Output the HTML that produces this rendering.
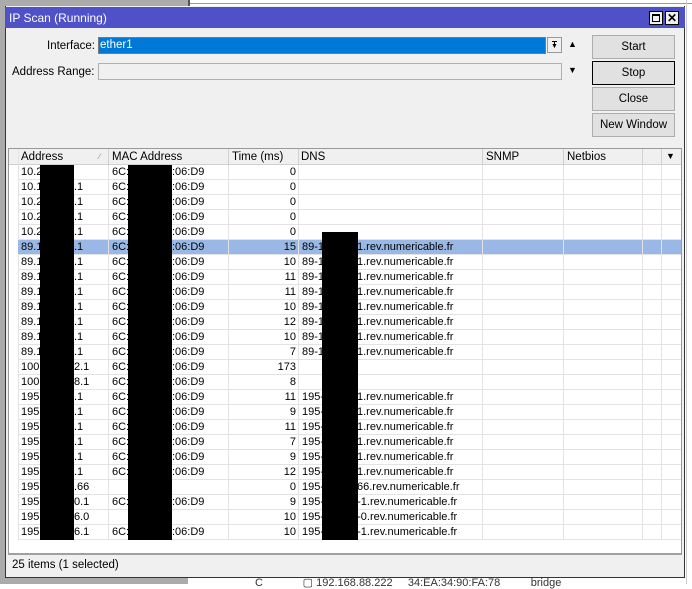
<!DOCTYPE html>
<html><head><meta charset="utf-8"><style>
*{margin:0;padding:0;box-sizing:border-box}
body{width:692px;height:584px;overflow:hidden;background:#fff;font-family:"Liberation Sans",Arial,sans-serif;font-size:11px;color:#000;position:relative}
.a{position:absolute}
.lbl{position:absolute;white-space:nowrap}
.btn{position:absolute;left:592px;width:83px;height:24px;background:#e1e1e1;border:1px solid #adadad;text-align:center;line-height:22px;font-size:11.5px}
.row{position:absolute;left:18px;width:663px;height:15px;border-bottom:1px solid #e3e3e3}
.c{position:absolute;top:0;height:15px;line-height:14px;white-space:nowrap;border-right:1px solid #e3e3e3}
.blk{position:absolute;background:#000}
</style></head><body>
<div class="a" style="left:0;top:0;width:188px;height:584px;background:#ababab"></div>
<div class="a" style="left:188px;top:0;width:2px;height:10px;background:#555"></div>
<div class="a" style="left:190px;top:3px;width:502px;height:1px;background:#999"></div>
<div class="a" style="left:686px;top:0;width:1px;height:584px;background:#ccc"></div>
<div class="a" style="left:5px;top:6px;width:680px;height:572px;background:#f0f0f0;border:1px solid #333;border-top:none"></div>
<div class="a" style="left:5px;top:7px;width:680px;height:21px;background:#4f51c9"></div>
<div class="lbl" style="left:9px;top:11px;color:#fff;font-size:12px">IP Scan (Running)</div>
<div class="a" style="left:649px;top:11px;width:14px;height:14px;background:#f0f0f0;border:1px solid #000"><div class="a" style="left:2px;top:2px;width:8px;height:8px;border:1px solid #000;border-top-width:2px"></div></div>
<div class="a" style="left:665px;top:11px;width:14px;height:14px;background:#f0f0f0;border:1px solid #000;font-size:12px;line-height:12px;text-align:center;font-weight:bold">✕</div>
<div class="lbl" style="left:47px;top:40px;font-size:11.5px">Interface:</div>
<div class="a" style="left:98px;top:37px;width:448px;height:17px;background:#0078d7;color:#fff;line-height:15px;padding-left:1px;border:1px solid #7a7a7a;font-size:11.5px">ether1</div>
<div class="a" style="left:547px;top:37px;width:15px;height:16px;background:#f0f0f0;border:1px solid #999"><div class="a" style="left:4px;top:3px;width:5px;height:1px;background:#000"></div><div class="a" style="left:6px;top:4px;width:1px;height:5px;background:#000"></div><div class="lbl" style="left:3px;top:5px;font-size:7px;line-height:7px">▼</div></div>
<div class="lbl" style="left:568px;top:39px;font-size:9px">▲</div>
<div class="lbl" style="left:12px;top:66px;font-size:11.5px">Address Range:</div>
<div class="a" style="left:98px;top:63px;width:464px;height:17px;background:#f0f0f0;border:1px solid #b0b0b0"></div>
<div class="lbl" style="left:568px;top:65px;font-size:9px">▼</div>
<div class="btn" style="top:35px">Start</div>
<div class="btn" style="top:61px;border:1px solid #000">Stop</div>
<div class="btn" style="top:87px">Close</div>
<div class="btn" style="top:113px">New Window</div>
<div class="a" style="left:8px;top:148px;width:674px;height:407px;background:#fff;border:1px solid #999;border-bottom:2px solid #a0a0a0"></div>
<div class="a" style="left:9px;top:149px;width:672px;height:16px;background:#f0f0f0;border-bottom:1px solid #d0d0d0"></div>
<div class="a" style="left:18px;top:149px;width:1px;height:391px;background:#e3e3e3"></div>
<div class="c" style="left:18px;top:149px;width:91px;padding-left:3px;line-height:16px;border-color:#d0d0d0;font-size:11.5px">Address<span style="position:absolute;left:81px;font-size:8px;color:#888">∕</span></div>
<div class="c" style="left:109px;top:149px;width:120px;padding-left:3px;line-height:16px;border-color:#d0d0d0;font-size:11.5px">MAC Address</div>
<div class="c" style="left:229px;top:149px;width:70px;padding-left:3px;line-height:16px;border-color:#d0d0d0;font-size:11.5px">Time (ms)</div>
<div class="c" style="left:299px;top:149px;width:184px;padding-left:2px;line-height:16px;border-color:#d0d0d0;font-size:11.5px">DNS</div>
<div class="c" style="left:483px;top:149px;width:81px;padding-left:3px;line-height:16px;border-color:#d0d0d0;font-size:11.5px">SNMP</div>
<div class="c" style="left:564px;top:149px;width:79px;padding-left:3px;line-height:16px;border-color:#d0d0d0;font-size:11.5px">Netbios</div>
<div class="c" style="left:643px;top:149px;width:19px;border-color:#d0d0d0"></div>
<div class="lbl" style="left:666px;top:151px;font-size:9px">▼</div>
<div id="rows"></div>
<div class="lbl" style="left:12px;top:559px;font-size:11.5px">25 items (1 selected)</div>
<div class="blk" style="left:40px;top:165px;width:34px;height:375px"></div>
<div class="blk" style="left:128px;top:165px;width:44px;height:375px"></div>
<div class="blk" style="left:322px;top:232px;width:36px;height:308px"></div>
<div class="a" style="left:190px;top:578px;width:496px;height:6px;background:#fff"></div>
<div class="lbl" style="left:255px;top:576px;font-size:11px;color:#333">C &nbsp; &nbsp; &nbsp; &nbsp; &nbsp; &nbsp; ▢ 192.168.88.222 &nbsp; &nbsp; 34:EA:34:90:FA:78 &nbsp; &nbsp; &nbsp; &nbsp; &nbsp;bridge</div>
<script>
var d=[
["10.2","6C:","06:D9","0",""],["10.1","6C:","06:D9","0",""],["10.2","6C:","06:D9","0",""],["10.2","6C:","06:D9","0",""],["10.2","6C:","06:D9","0",""],
["89.1","6C:","06:D9","15","89-1"],["89.1","6C:","06:D9","10","89-1"],["89.1","6C:","06:D9","11","89-1"],["89.1","6C:","06:D9","11","89-1"],["89.1","6C:","06:D9","10","89-1"],["89.1","6C:","06:D9","12","89-1"],["89.1","6C:","06:D9","10","89-1"],["89.1","6C:","06:D9","7","89-1"],
["100","6C:","06:D9","173",""],["100","6C:","06:D9","8",""],
["195","6C:","06:D9","11","195-"],["195","6C:","06:D9","9","195-"],["195","6C:","06:D9","11","195-"],["195","6C:","06:D9","7","195-"],["195","6C:","06:D9","9","195-"],["195","6C:","06:D9","12","195-"],
["195","","","0","195-"],["195","6C:","06:D9","9","195-"],["195","","","10","195-"],["195","6C:","06:D9","10","195-"]];
var at=["",".1",".1",".1",".1",".1",".1",".1",".1",".1",".1",".1",".1","2.1","8.1",".1",".1",".1",".1",".1",".1",".66","0.1","6.0","6.1"];
var dt=["","","","","","1","1","1","1","1","1","1","1","","","1","1","1","1","1","1","66","0-1","6-0","6-1"];
var h="";
for(var i=0;i<25;i++){var r=d[i],y=165+i*15,sel=i==5;
h+='<div class="row" style="top:'+y+'px;'+(sel?'background:#99b8e6;':'')+'">';
h+='<div class="c" style="left:0;width:91px;padding-left:3px">'+r[0]+'<span style="position:absolute;left:56px">'+at[i]+'</span></div>';
h+='<div class="c" style="left:91px;width:120px;padding-left:3px">'+r[1]+'<span style="position:absolute;left:63px">'+(r[2]?':'+r[2]:'')+'</span></div>';
h+='<div class="c" style="left:211px;width:70px;text-align:right;padding-right:2px">'+r[3]+'</div>';
h+='<div class="c" style="left:281px;width:184px;padding-left:3px">'+r[4]+(r[4]?'<span style="position:absolute;left:'+(dt[i].length>2?'52':'58')+'px">'+dt[i]+'.rev.numericable.fr</span>':'')+'</div>';
h+='<div class="c" style="left:465px;width:81px"></div><div class="c" style="left:546px;width:79px"></div><div class="c" style="left:625px;width:19px"></div>';
h+='</div>';}
document.getElementById('rows').innerHTML=h;
</script>
</body></html>
